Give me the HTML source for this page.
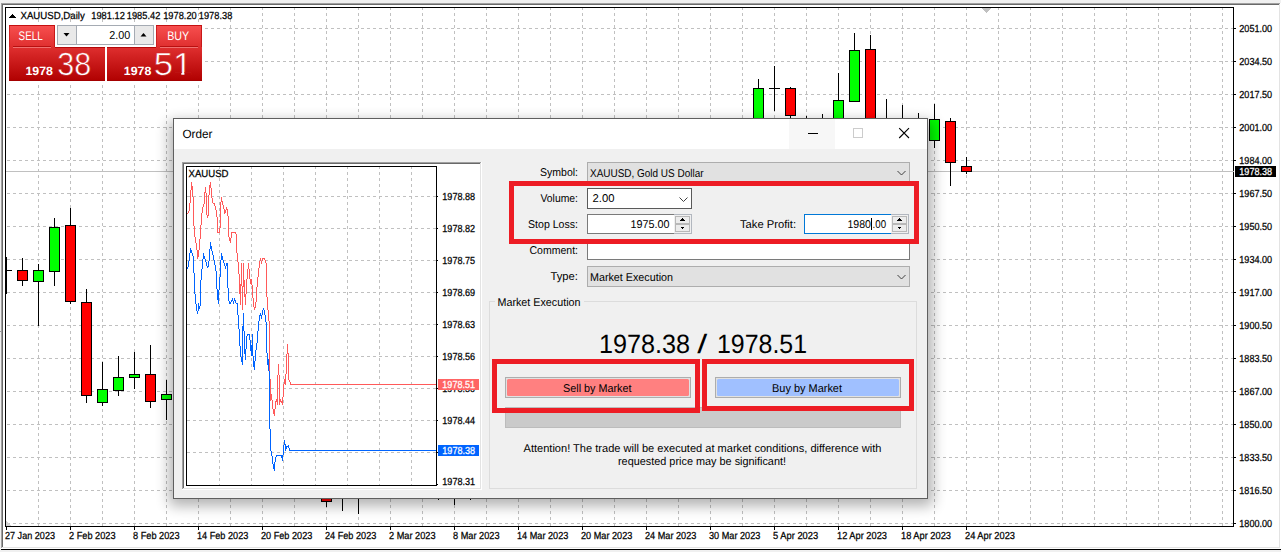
<!DOCTYPE html>
<html><head><meta charset="utf-8"><title>Order</title>
<style>
html,body{margin:0;padding:0;background:#f0f0f0;overflow:hidden}
svg{display:block}
text{font-family:"Liberation Sans",sans-serif;white-space:pre}
</style></head><body>
<svg width="1281" height="552" viewBox="0 0 1281 552" text-rendering="geometricPrecision">
<rect x="0" y="0" width="1281" height="552" fill="#f0f0f0" />
<rect x="1" y="3" width="1280" height="546" fill="#ffffff" />
<rect x="1" y="3" width="1279" height="1" fill="#a0a0a0" />
<rect x="1" y="3" width="1" height="545" fill="#a0a0a0" />
<rect x="2" y="4" width="1278" height="544" fill="#e3e3e3" />
<rect x="2" y="4" width="1277" height="1" fill="#696969" />
<rect x="2" y="4" width="1" height="543" fill="#696969" />
<rect x="3" y="5" width="1276" height="542" fill="#ffffff" />
<rect x="1" y="549" width="1281" height="1" fill="#000000" />
<rect x="0" y="550" width="1281" height="2" fill="#f0f0f0" />
<rect x="0" y="331" width="1" height="1" fill="#9a9a9a" />
<g shape-rendering="crispEdges">
<line x1="38.5" y1="7" x2="38.5" y2="526" stroke="#c0c0c0" stroke-dasharray="3 3"/>
<line x1="70.5" y1="7" x2="70.5" y2="526" stroke="#c0c0c0" stroke-dasharray="3 3"/>
<line x1="102.5" y1="7" x2="102.5" y2="526" stroke="#c0c0c0" stroke-dasharray="3 3"/>
<line x1="134.5" y1="7" x2="134.5" y2="526" stroke="#c0c0c0" stroke-dasharray="3 3"/>
<line x1="166.5" y1="7" x2="166.5" y2="526" stroke="#c0c0c0" stroke-dasharray="3 3"/>
<line x1="198.5" y1="7" x2="198.5" y2="526" stroke="#c0c0c0" stroke-dasharray="3 3"/>
<line x1="230.5" y1="7" x2="230.5" y2="526" stroke="#c0c0c0" stroke-dasharray="3 3"/>
<line x1="262.5" y1="7" x2="262.5" y2="526" stroke="#c0c0c0" stroke-dasharray="3 3"/>
<line x1="294.5" y1="7" x2="294.5" y2="526" stroke="#c0c0c0" stroke-dasharray="3 3"/>
<line x1="326.5" y1="7" x2="326.5" y2="526" stroke="#c0c0c0" stroke-dasharray="3 3"/>
<line x1="358.5" y1="7" x2="358.5" y2="526" stroke="#c0c0c0" stroke-dasharray="3 3"/>
<line x1="390.5" y1="7" x2="390.5" y2="526" stroke="#c0c0c0" stroke-dasharray="3 3"/>
<line x1="422.5" y1="7" x2="422.5" y2="526" stroke="#c0c0c0" stroke-dasharray="3 3"/>
<line x1="454.5" y1="7" x2="454.5" y2="526" stroke="#c0c0c0" stroke-dasharray="3 3"/>
<line x1="486.5" y1="7" x2="486.5" y2="526" stroke="#c0c0c0" stroke-dasharray="3 3"/>
<line x1="518.5" y1="7" x2="518.5" y2="526" stroke="#c0c0c0" stroke-dasharray="3 3"/>
<line x1="550.5" y1="7" x2="550.5" y2="526" stroke="#c0c0c0" stroke-dasharray="3 3"/>
<line x1="582.5" y1="7" x2="582.5" y2="526" stroke="#c0c0c0" stroke-dasharray="3 3"/>
<line x1="614.5" y1="7" x2="614.5" y2="526" stroke="#c0c0c0" stroke-dasharray="3 3"/>
<line x1="646.5" y1="7" x2="646.5" y2="526" stroke="#c0c0c0" stroke-dasharray="3 3"/>
<line x1="678.5" y1="7" x2="678.5" y2="526" stroke="#c0c0c0" stroke-dasharray="3 3"/>
<line x1="710.5" y1="7" x2="710.5" y2="526" stroke="#c0c0c0" stroke-dasharray="3 3"/>
<line x1="742.5" y1="7" x2="742.5" y2="526" stroke="#c0c0c0" stroke-dasharray="3 3"/>
<line x1="774.5" y1="7" x2="774.5" y2="526" stroke="#c0c0c0" stroke-dasharray="3 3"/>
<line x1="806.5" y1="7" x2="806.5" y2="526" stroke="#c0c0c0" stroke-dasharray="3 3"/>
<line x1="838.5" y1="7" x2="838.5" y2="526" stroke="#c0c0c0" stroke-dasharray="3 3"/>
<line x1="870.5" y1="7" x2="870.5" y2="526" stroke="#c0c0c0" stroke-dasharray="3 3"/>
<line x1="902.5" y1="7" x2="902.5" y2="526" stroke="#c0c0c0" stroke-dasharray="3 3"/>
<line x1="934.5" y1="7" x2="934.5" y2="526" stroke="#c0c0c0" stroke-dasharray="3 3"/>
<line x1="966.5" y1="7" x2="966.5" y2="526" stroke="#c0c0c0" stroke-dasharray="3 3"/>
<line x1="998.5" y1="7" x2="998.5" y2="526" stroke="#c0c0c0" stroke-dasharray="3 3"/>
<line x1="1030.5" y1="7" x2="1030.5" y2="526" stroke="#c0c0c0" stroke-dasharray="3 3"/>
<line x1="1062.5" y1="7" x2="1062.5" y2="526" stroke="#c0c0c0" stroke-dasharray="3 3"/>
<line x1="1094.5" y1="7" x2="1094.5" y2="526" stroke="#c0c0c0" stroke-dasharray="3 3"/>
<line x1="1126.5" y1="7" x2="1126.5" y2="526" stroke="#c0c0c0" stroke-dasharray="3 3"/>
<line x1="1158.5" y1="7" x2="1158.5" y2="526" stroke="#c0c0c0" stroke-dasharray="3 3"/>
<line x1="1190.5" y1="7" x2="1190.5" y2="526" stroke="#c0c0c0" stroke-dasharray="3 3"/>
<line x1="1222.5" y1="7" x2="1222.5" y2="526" stroke="#c0c0c0" stroke-dasharray="3 3"/>
<line x1="7" y1="28.5" x2="1233" y2="28.5" stroke="#c0c0c0" stroke-dasharray="3 3"/>
<line x1="7" y1="61.5" x2="1233" y2="61.5" stroke="#c0c0c0" stroke-dasharray="3 3"/>
<line x1="7" y1="94.5" x2="1233" y2="94.5" stroke="#c0c0c0" stroke-dasharray="3 3"/>
<line x1="7" y1="127.5" x2="1233" y2="127.5" stroke="#c0c0c0" stroke-dasharray="3 3"/>
<line x1="7" y1="160.5" x2="1233" y2="160.5" stroke="#c0c0c0" stroke-dasharray="3 3"/>
<line x1="7" y1="193.5" x2="1233" y2="193.5" stroke="#c0c0c0" stroke-dasharray="3 3"/>
<line x1="7" y1="226.5" x2="1233" y2="226.5" stroke="#c0c0c0" stroke-dasharray="3 3"/>
<line x1="7" y1="259.5" x2="1233" y2="259.5" stroke="#c0c0c0" stroke-dasharray="3 3"/>
<line x1="7" y1="292.5" x2="1233" y2="292.5" stroke="#c0c0c0" stroke-dasharray="3 3"/>
<line x1="7" y1="325.5" x2="1233" y2="325.5" stroke="#c0c0c0" stroke-dasharray="3 3"/>
<line x1="7" y1="358.5" x2="1233" y2="358.5" stroke="#c0c0c0" stroke-dasharray="3 3"/>
<line x1="7" y1="391.5" x2="1233" y2="391.5" stroke="#c0c0c0" stroke-dasharray="3 3"/>
<line x1="7" y1="424.5" x2="1233" y2="424.5" stroke="#c0c0c0" stroke-dasharray="3 3"/>
<line x1="7" y1="457.5" x2="1233" y2="457.5" stroke="#c0c0c0" stroke-dasharray="3 3"/>
<line x1="7" y1="490.5" x2="1233" y2="490.5" stroke="#c0c0c0" stroke-dasharray="3 3"/>
<line x1="7" y1="523.5" x2="1233" y2="523.5" stroke="#c0c0c0" stroke-dasharray="3 3"/>
<rect x="6" y="171" width="1228" height="1" fill="#c0c0c0" />
<path d="M981 8h10l-5 5z" fill="#c0c0c0"/>
<path d="M6 521l5 5h-5z" fill="#d0d0d0"/>
<rect x="6" y="257" width="1" height="37" fill="#000" />
<rect x="774" y="66" width="1" height="45" fill="#000" />
<rect x="806" y="116" width="1" height="25" fill="#000" />
<rect x="822" y="114" width="1" height="27" fill="#000" />
<rect x="886" y="99" width="1" height="42" fill="#000" />
<rect x="902" y="105" width="1" height="36" fill="#000" />
<rect x="918" y="113" width="1" height="28" fill="#000" />
<rect x="6" y="270" width="6" height="1" fill="#000" />
<rect x="769" y="88" width="11" height="1" fill="#000" />
<rect x="22" y="258" width="1" height="28" fill="#000" />
<rect x="17" y="270" width="11" height="11" fill="#000" />
<rect x="18" y="271" width="9" height="9" fill="#ff0000" />
<rect x="38" y="264" width="1" height="62" fill="#000" />
<rect x="33" y="270" width="11" height="12" fill="#000" />
<rect x="34" y="271" width="9" height="10" fill="#00ff00" />
<rect x="54" y="218" width="1" height="68" fill="#000" />
<rect x="49" y="227" width="11" height="45" fill="#000" />
<rect x="50" y="228" width="9" height="43" fill="#00ff00" />
<rect x="70" y="208" width="1" height="96" fill="#000" />
<rect x="65" y="225" width="11" height="77" fill="#000" />
<rect x="66" y="226" width="9" height="75" fill="#ff0000" />
<rect x="86" y="289" width="1" height="114" fill="#000" />
<rect x="81" y="302" width="11" height="94" fill="#000" />
<rect x="82" y="303" width="9" height="92" fill="#ff0000" />
<rect x="102" y="362" width="1" height="44" fill="#000" />
<rect x="97" y="389" width="11" height="14" fill="#000" />
<rect x="98" y="390" width="9" height="12" fill="#00ff00" />
<rect x="118" y="356" width="1" height="40" fill="#000" />
<rect x="113" y="377" width="11" height="14" fill="#000" />
<rect x="114" y="378" width="9" height="12" fill="#00ff00" />
<rect x="134" y="352" width="1" height="37" fill="#000" />
<rect x="129" y="374" width="11" height="4" fill="#000" />
<rect x="130" y="375" width="9" height="2" fill="#00ff00" />
<rect x="150" y="345" width="1" height="63" fill="#000" />
<rect x="145" y="374" width="11" height="28" fill="#000" />
<rect x="146" y="375" width="9" height="26" fill="#ff0000" />
<rect x="166" y="380" width="1" height="40" fill="#000" />
<rect x="161" y="394" width="11" height="6" fill="#000" />
<rect x="162" y="395" width="9" height="4" fill="#00ff00" />
<rect x="326" y="470" width="1" height="37" fill="#000" />
<rect x="321" y="480" width="11" height="22" fill="#000" />
<rect x="322" y="481" width="9" height="20" fill="#ff0000" />
<rect x="342" y="440" width="1" height="71" fill="#000" />
<rect x="337" y="470" width="11" height="11" fill="#000" />
<rect x="338" y="471" width="9" height="9" fill="#ff0000" />
<rect x="358" y="430" width="1" height="84" fill="#000" />
<rect x="353" y="460" width="11" height="21" fill="#000" />
<rect x="354" y="461" width="9" height="19" fill="#00ff00" />
<rect x="438" y="420" width="1" height="80" fill="#000" />
<rect x="433" y="440" width="11" height="31" fill="#000" />
<rect x="434" y="441" width="9" height="29" fill="#00ff00" />
<rect x="454" y="430" width="1" height="75" fill="#000" />
<rect x="449" y="450" width="11" height="31" fill="#000" />
<rect x="450" y="451" width="9" height="29" fill="#ff0000" />
<rect x="470" y="430" width="1" height="70" fill="#000" />
<rect x="465" y="450" width="11" height="31" fill="#000" />
<rect x="466" y="451" width="9" height="29" fill="#00ff00" />
<rect x="758" y="79" width="1" height="57" fill="#000" />
<rect x="753" y="88" width="11" height="43" fill="#000" />
<rect x="754" y="89" width="9" height="41" fill="#00ff00" />
<rect x="790" y="87" width="1" height="32" fill="#000" />
<rect x="785" y="88" width="11" height="28" fill="#000" />
<rect x="786" y="89" width="9" height="26" fill="#ff0000" />
<rect x="838" y="73" width="1" height="63" fill="#000" />
<rect x="833" y="100" width="11" height="31" fill="#000" />
<rect x="834" y="101" width="9" height="29" fill="#00ff00" />
<rect x="854" y="33" width="1" height="69" fill="#000" />
<rect x="849" y="50" width="11" height="52" fill="#000" />
<rect x="850" y="51" width="9" height="50" fill="#00ff00" />
<rect x="870" y="35" width="1" height="111" fill="#000" />
<rect x="865" y="49" width="11" height="92" fill="#000" />
<rect x="866" y="50" width="9" height="90" fill="#ff0000" />
<rect x="934" y="104" width="1" height="44" fill="#000" />
<rect x="929" y="119" width="11" height="22" fill="#000" />
<rect x="930" y="120" width="9" height="20" fill="#00ff00" />
<rect x="950" y="118" width="1" height="68" fill="#000" />
<rect x="945" y="121" width="11" height="42" fill="#000" />
<rect x="946" y="122" width="9" height="40" fill="#ff0000" />
<rect x="966" y="157" width="1" height="17" fill="#000" />
<rect x="961" y="166" width="11" height="6" fill="#000" />
<rect x="962" y="167" width="9" height="4" fill="#ff0000" />
<rect x="5" y="7" width="1229" height="1" fill="#000" />
<rect x="5" y="526" width="1229" height="1" fill="#000" />
<rect x="5" y="7" width="1" height="520" fill="#000" />
<rect x="1233" y="7" width="1" height="520" fill="#000" />
<rect x="1233" y="171" width="1" height="1" fill="#c0c0c0" />
<rect x="1234" y="28" width="2" height="1" fill="#000" />
<rect x="1234" y="61" width="2" height="1" fill="#000" />
<rect x="1234" y="94" width="2" height="1" fill="#000" />
<rect x="1234" y="127" width="2" height="1" fill="#000" />
<rect x="1234" y="160" width="2" height="1" fill="#000" />
<rect x="1234" y="193" width="2" height="1" fill="#000" />
<rect x="1234" y="226" width="2" height="1" fill="#000" />
<rect x="1234" y="259" width="2" height="1" fill="#000" />
<rect x="1234" y="292" width="2" height="1" fill="#000" />
<rect x="1234" y="325" width="2" height="1" fill="#000" />
<rect x="1234" y="358" width="2" height="1" fill="#000" />
<rect x="1234" y="391" width="2" height="1" fill="#000" />
<rect x="1234" y="424" width="2" height="1" fill="#000" />
<rect x="1234" y="457" width="2" height="1" fill="#000" />
<rect x="1234" y="490" width="2" height="1" fill="#000" />
<rect x="1234" y="523" width="2" height="1" fill="#000" />
<rect x="6" y="527" width="1" height="3" fill="#000" />
<rect x="70" y="527" width="1" height="3" fill="#000" />
<rect x="134" y="527" width="1" height="3" fill="#000" />
<rect x="198" y="527" width="1" height="3" fill="#000" />
<rect x="262" y="527" width="1" height="3" fill="#000" />
<rect x="326" y="527" width="1" height="3" fill="#000" />
<rect x="390" y="527" width="1" height="3" fill="#000" />
<rect x="454" y="527" width="1" height="3" fill="#000" />
<rect x="518" y="527" width="1" height="3" fill="#000" />
<rect x="582" y="527" width="1" height="3" fill="#000" />
<rect x="646" y="527" width="1" height="3" fill="#000" />
<rect x="710" y="527" width="1" height="3" fill="#000" />
<rect x="774" y="527" width="1" height="3" fill="#000" />
<rect x="838" y="527" width="1" height="3" fill="#000" />
<rect x="902" y="527" width="1" height="3" fill="#000" />
<rect x="966" y="527" width="1" height="3" fill="#000" />
</g>
<text x="1239.3" y="32" font-size="10.2" fill="#000" textLength="32.8" lengthAdjust="spacingAndGlyphs"  stroke="#000" stroke-width="0.25">2051.00</text>
<text x="1239.3" y="65" font-size="10.2" fill="#000" textLength="32.8" lengthAdjust="spacingAndGlyphs"  stroke="#000" stroke-width="0.25">2034.50</text>
<text x="1239.3" y="98" font-size="10.2" fill="#000" textLength="32.8" lengthAdjust="spacingAndGlyphs"  stroke="#000" stroke-width="0.25">2017.50</text>
<text x="1239.3" y="131" font-size="10.2" fill="#000" textLength="32.8" lengthAdjust="spacingAndGlyphs"  stroke="#000" stroke-width="0.25">2001.00</text>
<text x="1239.3" y="164" font-size="10.2" fill="#000" textLength="32.8" lengthAdjust="spacingAndGlyphs"  stroke="#000" stroke-width="0.25">1984.00</text>
<text x="1239.3" y="197" font-size="10.2" fill="#000" textLength="32.8" lengthAdjust="spacingAndGlyphs"  stroke="#000" stroke-width="0.25">1967.50</text>
<text x="1239.3" y="230" font-size="10.2" fill="#000" textLength="32.8" lengthAdjust="spacingAndGlyphs"  stroke="#000" stroke-width="0.25">1950.50</text>
<text x="1239.3" y="263" font-size="10.2" fill="#000" textLength="32.8" lengthAdjust="spacingAndGlyphs"  stroke="#000" stroke-width="0.25">1934.00</text>
<text x="1239.3" y="296" font-size="10.2" fill="#000" textLength="32.8" lengthAdjust="spacingAndGlyphs"  stroke="#000" stroke-width="0.25">1917.00</text>
<text x="1239.3" y="329" font-size="10.2" fill="#000" textLength="32.8" lengthAdjust="spacingAndGlyphs"  stroke="#000" stroke-width="0.25">1900.50</text>
<text x="1239.3" y="362" font-size="10.2" fill="#000" textLength="32.8" lengthAdjust="spacingAndGlyphs"  stroke="#000" stroke-width="0.25">1883.50</text>
<text x="1239.3" y="395" font-size="10.2" fill="#000" textLength="32.8" lengthAdjust="spacingAndGlyphs"  stroke="#000" stroke-width="0.25">1867.00</text>
<text x="1239.3" y="428" font-size="10.2" fill="#000" textLength="32.8" lengthAdjust="spacingAndGlyphs"  stroke="#000" stroke-width="0.25">1850.00</text>
<text x="1239.3" y="461" font-size="10.2" fill="#000" textLength="32.8" lengthAdjust="spacingAndGlyphs"  stroke="#000" stroke-width="0.25">1833.50</text>
<text x="1239.3" y="494" font-size="10.2" fill="#000" textLength="32.8" lengthAdjust="spacingAndGlyphs"  stroke="#000" stroke-width="0.25">1816.50</text>
<text x="1239.3" y="527" font-size="10.2" fill="#000" textLength="32.8" lengthAdjust="spacingAndGlyphs"  stroke="#000" stroke-width="0.25">1800.00</text>
<rect x="1235" y="166" width="41" height="11" fill="#000" />
<text x="1239.3" y="175" font-size="10.2" fill="#fff" textLength="32.8" lengthAdjust="spacingAndGlyphs"  stroke="#fff" stroke-width="0.25">1978.38</text>
<text x="5" y="539" font-size="10.2" fill="#000" textLength="50" lengthAdjust="spacingAndGlyphs"  stroke="#000" stroke-width="0.25">27 Jan 2023</text>
<text x="69" y="539" font-size="10.2" fill="#000" textLength="46.5" lengthAdjust="spacingAndGlyphs"  stroke="#000" stroke-width="0.25">2 Feb 2023</text>
<text x="133" y="539" font-size="10.2" fill="#000" textLength="46.5" lengthAdjust="spacingAndGlyphs"  stroke="#000" stroke-width="0.25">8 Feb 2023</text>
<text x="197" y="539" font-size="10.2" fill="#000" textLength="51.3" lengthAdjust="spacingAndGlyphs"  stroke="#000" stroke-width="0.25">14 Feb 2023</text>
<text x="261" y="539" font-size="10.2" fill="#000" textLength="51.3" lengthAdjust="spacingAndGlyphs"  stroke="#000" stroke-width="0.25">20 Feb 2023</text>
<text x="325" y="539" font-size="10.2" fill="#000" textLength="51.3" lengthAdjust="spacingAndGlyphs"  stroke="#000" stroke-width="0.25">24 Feb 2023</text>
<text x="389" y="539" font-size="10.2" fill="#000" textLength="46.5" lengthAdjust="spacingAndGlyphs"  stroke="#000" stroke-width="0.25">2 Mar 2023</text>
<text x="453" y="539" font-size="10.2" fill="#000" textLength="46.5" lengthAdjust="spacingAndGlyphs"  stroke="#000" stroke-width="0.25">8 Mar 2023</text>
<text x="517" y="539" font-size="10.2" fill="#000" textLength="51.3" lengthAdjust="spacingAndGlyphs"  stroke="#000" stroke-width="0.25">14 Mar 2023</text>
<text x="581" y="539" font-size="10.2" fill="#000" textLength="51.3" lengthAdjust="spacingAndGlyphs"  stroke="#000" stroke-width="0.25">20 Mar 2023</text>
<text x="645" y="539" font-size="10.2" fill="#000" textLength="51.3" lengthAdjust="spacingAndGlyphs"  stroke="#000" stroke-width="0.25">24 Mar 2023</text>
<text x="709" y="539" font-size="10.2" fill="#000" textLength="51.3" lengthAdjust="spacingAndGlyphs"  stroke="#000" stroke-width="0.25">30 Mar 2023</text>
<text x="773" y="539" font-size="10.2" fill="#000" textLength="45.2" lengthAdjust="spacingAndGlyphs"  stroke="#000" stroke-width="0.25">5 Apr 2023</text>
<text x="837" y="539" font-size="10.2" fill="#000" textLength="50" lengthAdjust="spacingAndGlyphs"  stroke="#000" stroke-width="0.25">12 Apr 2023</text>
<text x="901" y="539" font-size="10.2" fill="#000" textLength="50" lengthAdjust="spacingAndGlyphs"  stroke="#000" stroke-width="0.25">18 Apr 2023</text>
<text x="965" y="539" font-size="10.2" fill="#000" textLength="50" lengthAdjust="spacingAndGlyphs"  stroke="#000" stroke-width="0.25">24 Apr 2023</text>
<path d="M12 14h1v1h1v1h1v1h1v1h-7v-1h1v-1h1v-1h1z" fill="#000" shape-rendering="crispEdges"/>
<text x="20.5" y="19" font-size="10.2" fill="#000" textLength="64.3" lengthAdjust="spacingAndGlyphs"  stroke="#000" stroke-width="0.25">XAUUSD,Daily</text>
<text x="91.3" y="19" font-size="10.2" fill="#000" textLength="33.5" lengthAdjust="spacingAndGlyphs"  stroke="#000" stroke-width="0.25">1981.12</text>
<text x="126.8" y="19" font-size="10.2" fill="#000" textLength="33.5" lengthAdjust="spacingAndGlyphs"  stroke="#000" stroke-width="0.25">1985.42</text>
<text x="163.2" y="19" font-size="10.2" fill="#000" textLength="33.5" lengthAdjust="spacingAndGlyphs"  stroke="#000" stroke-width="0.25">1978.20</text>
<text x="198.8" y="19" font-size="10.2" fill="#000" textLength="33.5" lengthAdjust="spacingAndGlyphs"  stroke="#000" stroke-width="0.25">1978.38</text>
<defs>
<linearGradient id="rg" gradientUnits="userSpaceOnUse" x1="0" y1="25" x2="0" y2="81">
<stop offset="0" stop-color="#f85050"/><stop offset="0.38" stop-color="#e03030"/><stop offset="1" stop-color="#b00000"/></linearGradient>
<linearGradient id="sh" x1="0" y1="0" x2="0" y2="1"><stop offset="0" stop-color="#000" stop-opacity=".35"/><stop offset="1" stop-color="#000" stop-opacity="0"/></linearGradient>
<filter id="blur" x="-10%" y="-10%" width="120%" height="130%"><feGaussianBlur stdDeviation="7"/></filter>
</defs>
<g shape-rendering="crispEdges">
<rect x="6" y="23" width="198" height="60" fill="#ffffff" />
<rect x="9" y="25" width="46" height="22" fill="url(#rg)" />
<rect x="156" y="25" width="46" height="22" fill="url(#rg)" />
<rect x="9" y="47" width="96" height="34" fill="url(#rg)" />
<rect x="107" y="47" width="95" height="34" fill="url(#rg)" />
<rect x="9" y="25" width="46" height="1" fill="#c41010" />
<rect x="156" y="25" width="46" height="1" fill="#c41010" />
<rect x="9" y="26" width="1" height="21" fill="#d02020" />
<rect x="54" y="26" width="1" height="21" fill="#c81818" />
<rect x="156" y="26" width="1" height="21" fill="#d02020" />
<rect x="201" y="26" width="1" height="21" fill="#c81818" />
<rect x="55" y="47" width="50" height="1" fill="#b40808" />
<rect x="107" y="47" width="49" height="1" fill="#b40808" />
<rect x="9" y="80" width="96" height="1" fill="#a40000" />
<rect x="107" y="80" width="95" height="1" fill="#a40000" />
<rect x="13" y="46" width="38" height="1" fill="#b81010" />
<rect x="13" y="47" width="38" height="1" fill="#f07070" />
<rect x="160" y="46" width="38" height="1" fill="#b81010" />
<rect x="160" y="47" width="38" height="1" fill="#f07070" />
<rect x="57" y="25" width="97" height="20" fill="#a5abb3" />
<rect x="58" y="26" width="18" height="18" fill="#e9e9e9" />
<rect x="77" y="26" width="57" height="18" fill="#ffffff" />
<rect x="135" y="26" width="18" height="18" fill="#e9e9e9" />
</g><path d="M63.5 33h6l-3 3.5z" fill="#000"/><path d="M140.5 36.5h6l-3 -3.5z" fill="#000"/><g>
</g>
<text x="42.6" y="40" font-size="12.5" fill="#fff" text-anchor="end" textLength="24" lengthAdjust="spacingAndGlyphs" >SELL</text>
<text x="189.2" y="40" font-size="12.5" fill="#fff" text-anchor="end" textLength="22" lengthAdjust="spacingAndGlyphs" >BUY</text>
<text x="130.3" y="38.5" font-size="11.5" fill="#000" text-anchor="end" textLength="21" lengthAdjust="spacingAndGlyphs" >2.00</text>
<text x="25.5" y="74.5" font-size="12" fill="#fff" textLength="27.5" lengthAdjust="spacingAndGlyphs" font-weight="bold" >1978</text>
<text x="57.3" y="74.8" font-size="32" fill="#fff" textLength="34" lengthAdjust="spacingAndGlyphs" stroke="url(#rg)" stroke-width="0.55">38</text>
<text x="123.8" y="74.5" font-size="12" fill="#fff" textLength="27.5" lengthAdjust="spacingAndGlyphs" font-weight="bold" >1978</text>
<text x="153.8" y="74.8" font-size="32" fill="#fff" textLength="38.5" lengthAdjust="spacingAndGlyphs" stroke="url(#rg)" stroke-width="0.55">51</text>
<path d="M174 72.3h7.3v3.4h-7.3zM184.4 72.3h7v3.4h-7z" fill="url(#rg)"/>
<rect x="169" y="121" width="764" height="385" rx="4" fill="#000" opacity=".30" filter="url(#blur)"/>
<g shape-rendering="crispEdges">
<rect x="173" y="118" width="755" height="381" fill="#5f5f5f" />
<rect x="174" y="119" width="753" height="30" fill="#ffffff" />
<rect x="789" y="119" width="46" height="30" fill="#f7f7f7" />
<rect x="174" y="149" width="753" height="349" fill="#f0f0f0" />
<rect x="808" y="133" width="10" height="1" fill="#000" />
<rect x="853" y="128" width="10" height="10" fill="#cccccc" />
<rect x="854" y="129" width="8" height="8" fill="#ffffff" />
</g>
<path d="M899.2 128.2l9.8 9.8M909 128.2l-9.8 9.8" stroke="#000" stroke-width="1.1" fill="none"/>
<text x="182.5" y="138" font-size="12" fill="#000" textLength="30" lengthAdjust="spacingAndGlyphs" >Order</text>
<g shape-rendering="crispEdges">
<rect x="182" y="162" width="300" height="328" fill="#ffffff" />
<rect x="182" y="162" width="299" height="1" fill="#a0a0a0" />
<rect x="182" y="162" width="1" height="327" fill="#a0a0a0" />
<rect x="183" y="163" width="298" height="326" fill="#e3e3e3" />
<rect x="183" y="163" width="297" height="1" fill="#696969" />
<rect x="183" y="163" width="1" height="325" fill="#696969" />
<rect x="184" y="164" width="296" height="324" fill="#ffffff" />
<line x1="219.5" y1="166" x2="219.5" y2="485" stroke="#c0c0c0" stroke-dasharray="3 3" stroke-dashoffset="0"/>
<line x1="251.5" y1="166" x2="251.5" y2="485" stroke="#c0c0c0" stroke-dasharray="3 3" stroke-dashoffset="0"/>
<line x1="283.5" y1="166" x2="283.5" y2="485" stroke="#c0c0c0" stroke-dasharray="3 3" stroke-dashoffset="0"/>
<line x1="315.5" y1="166" x2="315.5" y2="485" stroke="#c0c0c0" stroke-dasharray="3 3" stroke-dashoffset="0"/>
<line x1="347.5" y1="166" x2="347.5" y2="485" stroke="#c0c0c0" stroke-dasharray="3 3" stroke-dashoffset="0"/>
<line x1="379.5" y1="166" x2="379.5" y2="485" stroke="#c0c0c0" stroke-dasharray="3 3" stroke-dashoffset="0"/>
<line x1="411.5" y1="166" x2="411.5" y2="485" stroke="#c0c0c0" stroke-dasharray="3 3" stroke-dashoffset="0"/>
<line x1="187" y1="196.5" x2="436" y2="196.5" stroke="#c0c0c0" stroke-dasharray="3 3"/>
<line x1="187" y1="228.5" x2="436" y2="228.5" stroke="#c0c0c0" stroke-dasharray="3 3"/>
<line x1="187" y1="260.5" x2="436" y2="260.5" stroke="#c0c0c0" stroke-dasharray="3 3"/>
<line x1="187" y1="292.5" x2="436" y2="292.5" stroke="#c0c0c0" stroke-dasharray="3 3"/>
<line x1="187" y1="324.5" x2="436" y2="324.5" stroke="#c0c0c0" stroke-dasharray="3 3"/>
<line x1="187" y1="356.5" x2="436" y2="356.5" stroke="#c0c0c0" stroke-dasharray="3 3"/>
<line x1="187" y1="388.5" x2="436" y2="388.5" stroke="#c0c0c0" stroke-dasharray="3 3"/>
<line x1="187" y1="420.5" x2="436" y2="420.5" stroke="#c0c0c0" stroke-dasharray="3 3"/>
<line x1="187" y1="452.5" x2="436" y2="452.5" stroke="#c0c0c0" stroke-dasharray="3 3"/>
<path d="M188 211h1v2h-1zM189 203h1v8h-1zM190 190h1v13h-1zM191 182h1v8h-1zM192 186h1v11h-1zM193 197h1v29h-1zM194 226h1v11h-1zM195 237h1v6h-1zM196 243h1v7h-1zM197 250h1v9h-1zM198 250h1v7h-1zM199 239h1v11h-1zM200 225h1v14h-1zM201 213h1v12h-1zM202 207h1v6h-1zM203 204h1v3h-1zM204 192h1v12h-1zM205 187h1v6h-1zM206 193h1v22h-1zM207 215h1v3h-1zM208 195h1v21h-1zM209 185h1v10h-1zM210 182h1v6h-1zM211 188h1v10h-1zM212 198h1v5h-1zM214 203h1v3h-1zM215 206h1v4h-1zM216 210h1v7h-1zM217 217h1v16h-1zM219 228h1v5h-1zM220 202h1v26h-1zM221 197h1v5h-1zM222 201h1v4h-1zM223 205h1v4h-1zM224 209h1v5h-1zM225 210h1v3h-1zM226 207h1v3h-1zM227 209h1v7h-1zM228 216h1v21h-1zM229 237h1v4h-1zM230 238h1v5h-1zM231 232h1v6h-1zM235 232h1v2h-1zM236 234h1v19h-1zM237 253h1v9h-1zM238 262h1v12h-1zM239 274h1v20h-1zM240 284h1v21h-1zM241 263h1v23h-1zM242 286h1v24h-1zM243 263h1v24h-1zM244 280h1v17h-1zM245 294h1v11h-1zM246 279h1v15h-1zM247 269h1v10h-1zM248 263h1v6h-1zM249 269h1v10h-1zM250 279h1v5h-1zM251 279h1v6h-1zM252 285h1v13h-1zM253 298h1v9h-1zM254 307h1v3h-1zM255 302h1v6h-1zM256 287h1v15h-1zM257 277h1v10h-1zM258 268h1v9h-1zM259 261h1v7h-1zM260 258h1v3h-1zM261 261h1v3h-1zM262 258h1v3h-1zM264 258h1v2h-1zM265 260h1v3h-1zM266 263h1v34h-1zM267 297h1v13h-1zM268 310h1v11h-1zM269 321h1v58h-1zM270 379h1v22h-1zM271 394h1v6h-1zM272 400h1v9h-1zM273 409h1v5h-1zM274 409h1v7h-1zM275 401h1v8h-1zM276 399h1v3h-1zM277 375h1v30h-1zM278 364h1v11h-1zM279 375h1v30h-1zM280 399h1v3h-1zM281 401h1v2h-1zM282 397h1v8h-1zM283 384h1v13h-1zM284 379h1v5h-1zM285 374h1v11h-1zM286 354h1v20h-1zM287 344h1v10h-1zM288 353h1v27h-1zM289 380h1v2h-1zM290 382h1v3h-1zM213 203h1v1h-1zM187 213h1v1h-1zM218 232h1v1h-1zM232 232h3v1h-3zM263 258h1v1h-1zM291 384h146v1h-146z" fill="#ff5a5a"/>
<path d="M187 267h1v2h-1zM188 261h1v6h-1zM189 253h1v8h-1zM190 248h1v5h-1zM191 250h1v3h-1zM192 253h1v3h-1zM193 256h1v17h-1zM194 273h1v21h-1zM195 294h1v10h-1zM196 304h1v7h-1zM197 311h1v3h-1zM198 303h1v8h-1zM199 306h1v3h-1zM200 280h1v26h-1zM201 269h1v11h-1zM202 259h1v10h-1zM203 253h1v6h-1zM204 256h1v3h-1zM205 259h1v3h-1zM206 262h1v4h-1zM207 266h1v2h-1zM208 261h1v6h-1zM209 249h1v12h-1zM210 242h1v7h-1zM211 246h1v5h-1zM212 251h1v4h-1zM213 255h1v5h-1zM214 260h1v5h-1zM215 265h1v6h-1zM216 271h1v18h-1zM217 289h1v11h-1zM218 290h1v14h-1zM219 277h1v13h-1zM220 260h1v17h-1zM221 253h1v7h-1zM222 256h1v4h-1zM223 260h1v3h-1zM224 263h1v3h-1zM225 266h1v3h-1zM226 263h1v3h-1zM227 263h1v25h-1zM228 288h1v13h-1zM229 301h1v3h-1zM230 302h1v2h-1zM231 300h1v2h-1zM232 298h1v3h-1zM233 301h1v3h-1zM234 298h1v3h-1zM235 300h1v3h-1zM237 303h1v12h-1zM238 315h1v14h-1zM239 329h1v17h-1zM240 346h1v11h-1zM241 357h1v5h-1zM242 326h1v39h-1zM243 313h1v18h-1zM244 331h1v23h-1zM245 349h1v11h-1zM246 336h1v13h-1zM247 334h1v2h-1zM249 334h1v6h-1zM250 340h1v11h-1zM251 345h1v11h-1zM252 334h1v22h-1zM253 356h1v11h-1zM254 361h1v9h-1zM255 350h1v11h-1zM256 343h1v7h-1zM257 331h1v12h-1zM258 321h1v10h-1zM259 315h1v6h-1zM260 313h1v3h-1zM261 315h1v4h-1zM262 310h1v5h-1zM263 308h1v2h-1zM264 310h1v5h-1zM265 315h1v7h-1zM266 322h1v31h-1zM267 353h1v12h-1zM268 359h1v12h-1zM269 371h1v58h-1zM270 429h1v22h-1zM271 451h1v5h-1zM272 456h1v8h-1zM273 464h1v5h-1zM274 462h1v9h-1zM275 457h1v5h-1zM276 455h1v2h-1zM281 455h1v3h-1zM282 455h1v6h-1zM283 445h1v10h-1zM284 440h1v5h-1zM285 444h1v7h-1zM286 446h1v3h-1zM288 445h1v3h-1zM289 448h1v3h-1zM236 303h1v1h-1zM248 334h1v1h-1zM287 446h1v1h-1zM290 450h147v1h-147zM277 455h4v1h-4z" fill="#0064ff"/>
<rect x="186" y="166" width="251" height="1" fill="#000" />
<rect x="186" y="485" width="251" height="1" fill="#000" />
<rect x="186" y="166" width="1" height="320" fill="#000" />
<rect x="436" y="166" width="1" height="320" fill="#000" />
<rect x="437" y="196" width="1" height="1" fill="#000" />
<rect x="437" y="228" width="1" height="1" fill="#000" />
<rect x="437" y="260" width="1" height="1" fill="#000" />
<rect x="437" y="292" width="1" height="1" fill="#000" />
<rect x="437" y="324" width="1" height="1" fill="#000" />
<rect x="437" y="356" width="1" height="1" fill="#000" />
<rect x="437" y="388" width="1" height="1" fill="#000" />
<rect x="437" y="420" width="1" height="1" fill="#000" />
<rect x="437" y="452" width="1" height="1" fill="#000" />
<rect x="437" y="484" width="1" height="1" fill="#000" />
<rect x="438" y="379" width="41" height="11" fill="#ff6464" />
<rect x="438" y="445" width="41" height="11" fill="#0064ff" />
</g>
<text x="188.5" y="177" font-size="10.2" fill="#000" textLength="40" lengthAdjust="spacingAndGlyphs"  stroke="#000" stroke-width="0.25">XAUUSD</text>
<text x="442.3" y="200" font-size="10.2" fill="#000" textLength="32.8" lengthAdjust="spacingAndGlyphs"  stroke="#000" stroke-width="0.25">1978.88</text>
<text x="442.3" y="232" font-size="10.2" fill="#000" textLength="32.8" lengthAdjust="spacingAndGlyphs"  stroke="#000" stroke-width="0.25">1978.82</text>
<text x="442.3" y="264" font-size="10.2" fill="#000" textLength="32.8" lengthAdjust="spacingAndGlyphs"  stroke="#000" stroke-width="0.25">1978.75</text>
<text x="442.3" y="296" font-size="10.2" fill="#000" textLength="32.8" lengthAdjust="spacingAndGlyphs"  stroke="#000" stroke-width="0.25">1978.69</text>
<text x="442.3" y="328" font-size="10.2" fill="#000" textLength="32.8" lengthAdjust="spacingAndGlyphs"  stroke="#000" stroke-width="0.25">1978.63</text>
<text x="442.3" y="360" font-size="10.2" fill="#000" textLength="32.8" lengthAdjust="spacingAndGlyphs"  stroke="#000" stroke-width="0.25">1978.56</text>
<text x="442.3" y="392" font-size="10.2" fill="#000" textLength="32.8" lengthAdjust="spacingAndGlyphs"  stroke="#000" stroke-width="0.25">1978.50</text>
<text x="442.3" y="424" font-size="10.2" fill="#000" textLength="32.8" lengthAdjust="spacingAndGlyphs"  stroke="#000" stroke-width="0.25">1978.44</text>
<text x="442.3" y="485" font-size="10.2" fill="#000" textLength="32.8" lengthAdjust="spacingAndGlyphs"  stroke="#000" stroke-width="0.25">1978.31</text>
<rect x="438" y="379" width="41" height="11" fill="#ff6464" />
<text x="442.3" y="388" font-size="10.2" fill="#fff" textLength="32.8" lengthAdjust="spacingAndGlyphs"  stroke="#fff" stroke-width="0.25">1978.51</text>
<text x="442.3" y="454" font-size="10.2" fill="#fff" textLength="32.8" lengthAdjust="spacingAndGlyphs"  stroke="#fff" stroke-width="0.25">1978.38</text>
<g shape-rendering="crispEdges">
<rect x="587" y="162" width="323" height="21" fill="#adadad" />
<rect x="588" y="163" width="321" height="19" fill="#e1e1e1" />
<rect x="587" y="188" width="105" height="21" fill="#5a5a5a" />
<rect x="588" y="189" width="103" height="19" fill="#ffffff" />
<rect x="587" y="214" width="105" height="20" fill="#7a7a7a" />
<rect x="588" y="215" width="103" height="18" fill="#ffffff" />
<rect x="674" y="214" width="18" height="20" fill="#b2b7bf" />
<rect x="674" y="215" width="17" height="18" fill="#f0f0f0" />
<rect x="675" y="216" width="15" height="8" fill="#b8b8b8" />
<rect x="676" y="217" width="13" height="6" fill="#ececec" />
<rect x="675" y="224" width="15" height="8" fill="#b8b8b8" />
<rect x="676" y="225" width="13" height="6" fill="#ececec" />
<rect x="804" y="214" width="105" height="20" fill="#0078d7" />
<rect x="805" y="215" width="103" height="18" fill="#ffffff" />
<rect x="891" y="214" width="18" height="20" fill="#b2b7bf" />
<rect x="891" y="215" width="17" height="18" fill="#f0f0f0" />
<rect x="892" y="216" width="15" height="8" fill="#b8b8b8" />
<rect x="893" y="217" width="13" height="6" fill="#ececec" />
<rect x="892" y="224" width="15" height="8" fill="#b8b8b8" />
<rect x="893" y="225" width="13" height="6" fill="#ececec" />
<path d="M680 221h5l-2.5-3z M680 226.5h5l-2.5 3z M897 221h5l-2.5-3z M897 226.5h5l-2.5 3z" fill="#000"/>
<rect x="587" y="240" width="323" height="20" fill="#7a7a7a" />
<rect x="588" y="241" width="321" height="18" fill="#ffffff" />
<rect x="587" y="266" width="323" height="21" fill="#adadad" />
<rect x="588" y="267" width="321" height="19" fill="#e1e1e1" />
<rect x="871" y="218" width="1" height="12" fill="#000" />
</g>
<path d="M897.5 171l4 4 4-4M897.5 275l4 4 4-4M679.5 197.5l4 4 4-4" stroke="#404040" stroke-width="1" fill="none"/>
<text x="578" y="175.6" font-size="11.3" fill="#000" text-anchor="end" textLength="38" lengthAdjust="spacingAndGlyphs" >Symbol:</text>
<text x="578" y="201.6" font-size="11.3" fill="#000" text-anchor="end" textLength="37.5" lengthAdjust="spacingAndGlyphs" >Volume:</text>
<text x="578" y="227.6" font-size="11.3" fill="#000" text-anchor="end" textLength="50" lengthAdjust="spacingAndGlyphs" >Stop Loss:</text>
<text x="578" y="253.6" font-size="11.3" fill="#000" text-anchor="end" textLength="48.5" lengthAdjust="spacingAndGlyphs" >Comment:</text>
<text x="578" y="279.6" font-size="11.3" fill="#000" text-anchor="end" textLength="27.5" lengthAdjust="spacingAndGlyphs" >Type:</text>
<text x="796" y="227.6" font-size="11.3" fill="#000" text-anchor="end" textLength="56" lengthAdjust="spacingAndGlyphs" >Take Profit:</text>
<text x="590" y="177" font-size="11.3" fill="#000" textLength="113.5" lengthAdjust="spacingAndGlyphs" >XAUUSD, Gold US Dollar</text>
<text x="592.5" y="201.6" font-size="11.3" fill="#000" textLength="22" lengthAdjust="spacingAndGlyphs" >2.00</text>
<text x="669.5" y="228.4" font-size="11.3" fill="#000" text-anchor="end" textLength="39" lengthAdjust="spacingAndGlyphs" >1975.00</text>
<text x="871" y="228.4" font-size="11.3" fill="#000" text-anchor="end" textLength="23.5" lengthAdjust="spacingAndGlyphs" >1980</text>
<text x="872.6" y="228.4" font-size="11.3" fill="#000" textLength="13.5" lengthAdjust="spacingAndGlyphs" >.00</text>
<text x="590" y="281" font-size="11.3" fill="#000" textLength="83" lengthAdjust="spacingAndGlyphs" >Market Execution</text>
<g shape-rendering="crispEdges">
<rect x="489" y="301" width="428" height="188" fill="#dcdcdc" />
<rect x="490" y="302" width="426" height="186" fill="#f0f0f0" />
<rect x="495" y="299" width="89" height="6" fill="#f0f0f0" />
<rect x="505" y="407" width="396" height="21" fill="#bcbcbc" />
<rect x="506" y="408" width="394" height="19" fill="#cacaca" />
<rect x="505" y="377" width="186" height="21" fill="#adadad" />
<rect x="506" y="378" width="184" height="19" fill="#e1e1e1" />
<rect x="715" y="377" width="186" height="21" fill="#adadad" />
<rect x="716" y="378" width="184" height="19" fill="#e1e1e1" />
</g>
<rect x="507" y="379" width="182" height="17" rx="1.5" fill="#ff8080"/>
<rect x="717" y="379" width="182" height="17" rx="1.5" fill="#a0c0ff"/>
<text x="497.5" y="306" font-size="11.3" fill="#000" textLength="83" lengthAdjust="spacingAndGlyphs" >Market Execution</text>
<text x="599" y="353" font-size="26.5" fill="#000" textLength="91" lengthAdjust="spacingAndGlyphs" >1978.38</text>
<text x="697.3" y="353" font-size="26.5" fill="#000" textLength="10" lengthAdjust="spacingAndGlyphs" >/</text>
<text x="717" y="353" font-size="26.5" fill="#000" textLength="90" lengthAdjust="spacingAndGlyphs" >1978.51</text>
<text x="563" y="392" font-size="11.3" fill="#000" textLength="68.5" lengthAdjust="spacingAndGlyphs" >Sell by Market</text>
<text x="772" y="392" font-size="11.3" fill="#000" textLength="70" lengthAdjust="spacingAndGlyphs" >Buy by Market</text>
<text x="523.5" y="452" font-size="11.3" fill="#000" textLength="358" lengthAdjust="spacingAndGlyphs" >Attention! The trade will be executed at market conditions, difference with</text>
<text x="618" y="465" font-size="11.3" fill="#000" textLength="168" lengthAdjust="spacingAndGlyphs" >requested price may be significant!</text>
<rect x="511.5" y="183.5" width="405" height="58" fill="none" stroke="#ed1c24" stroke-width="5" shape-rendering="crispEdges"/>
<rect x="494.5" y="361.5" width="203" height="49" fill="none" stroke="#ed1c24" stroke-width="5" shape-rendering="crispEdges"/>
<rect x="704.5" y="361.5" width="207" height="47" fill="none" stroke="#ed1c24" stroke-width="5" shape-rendering="crispEdges"/>
</svg>
</body></html>
